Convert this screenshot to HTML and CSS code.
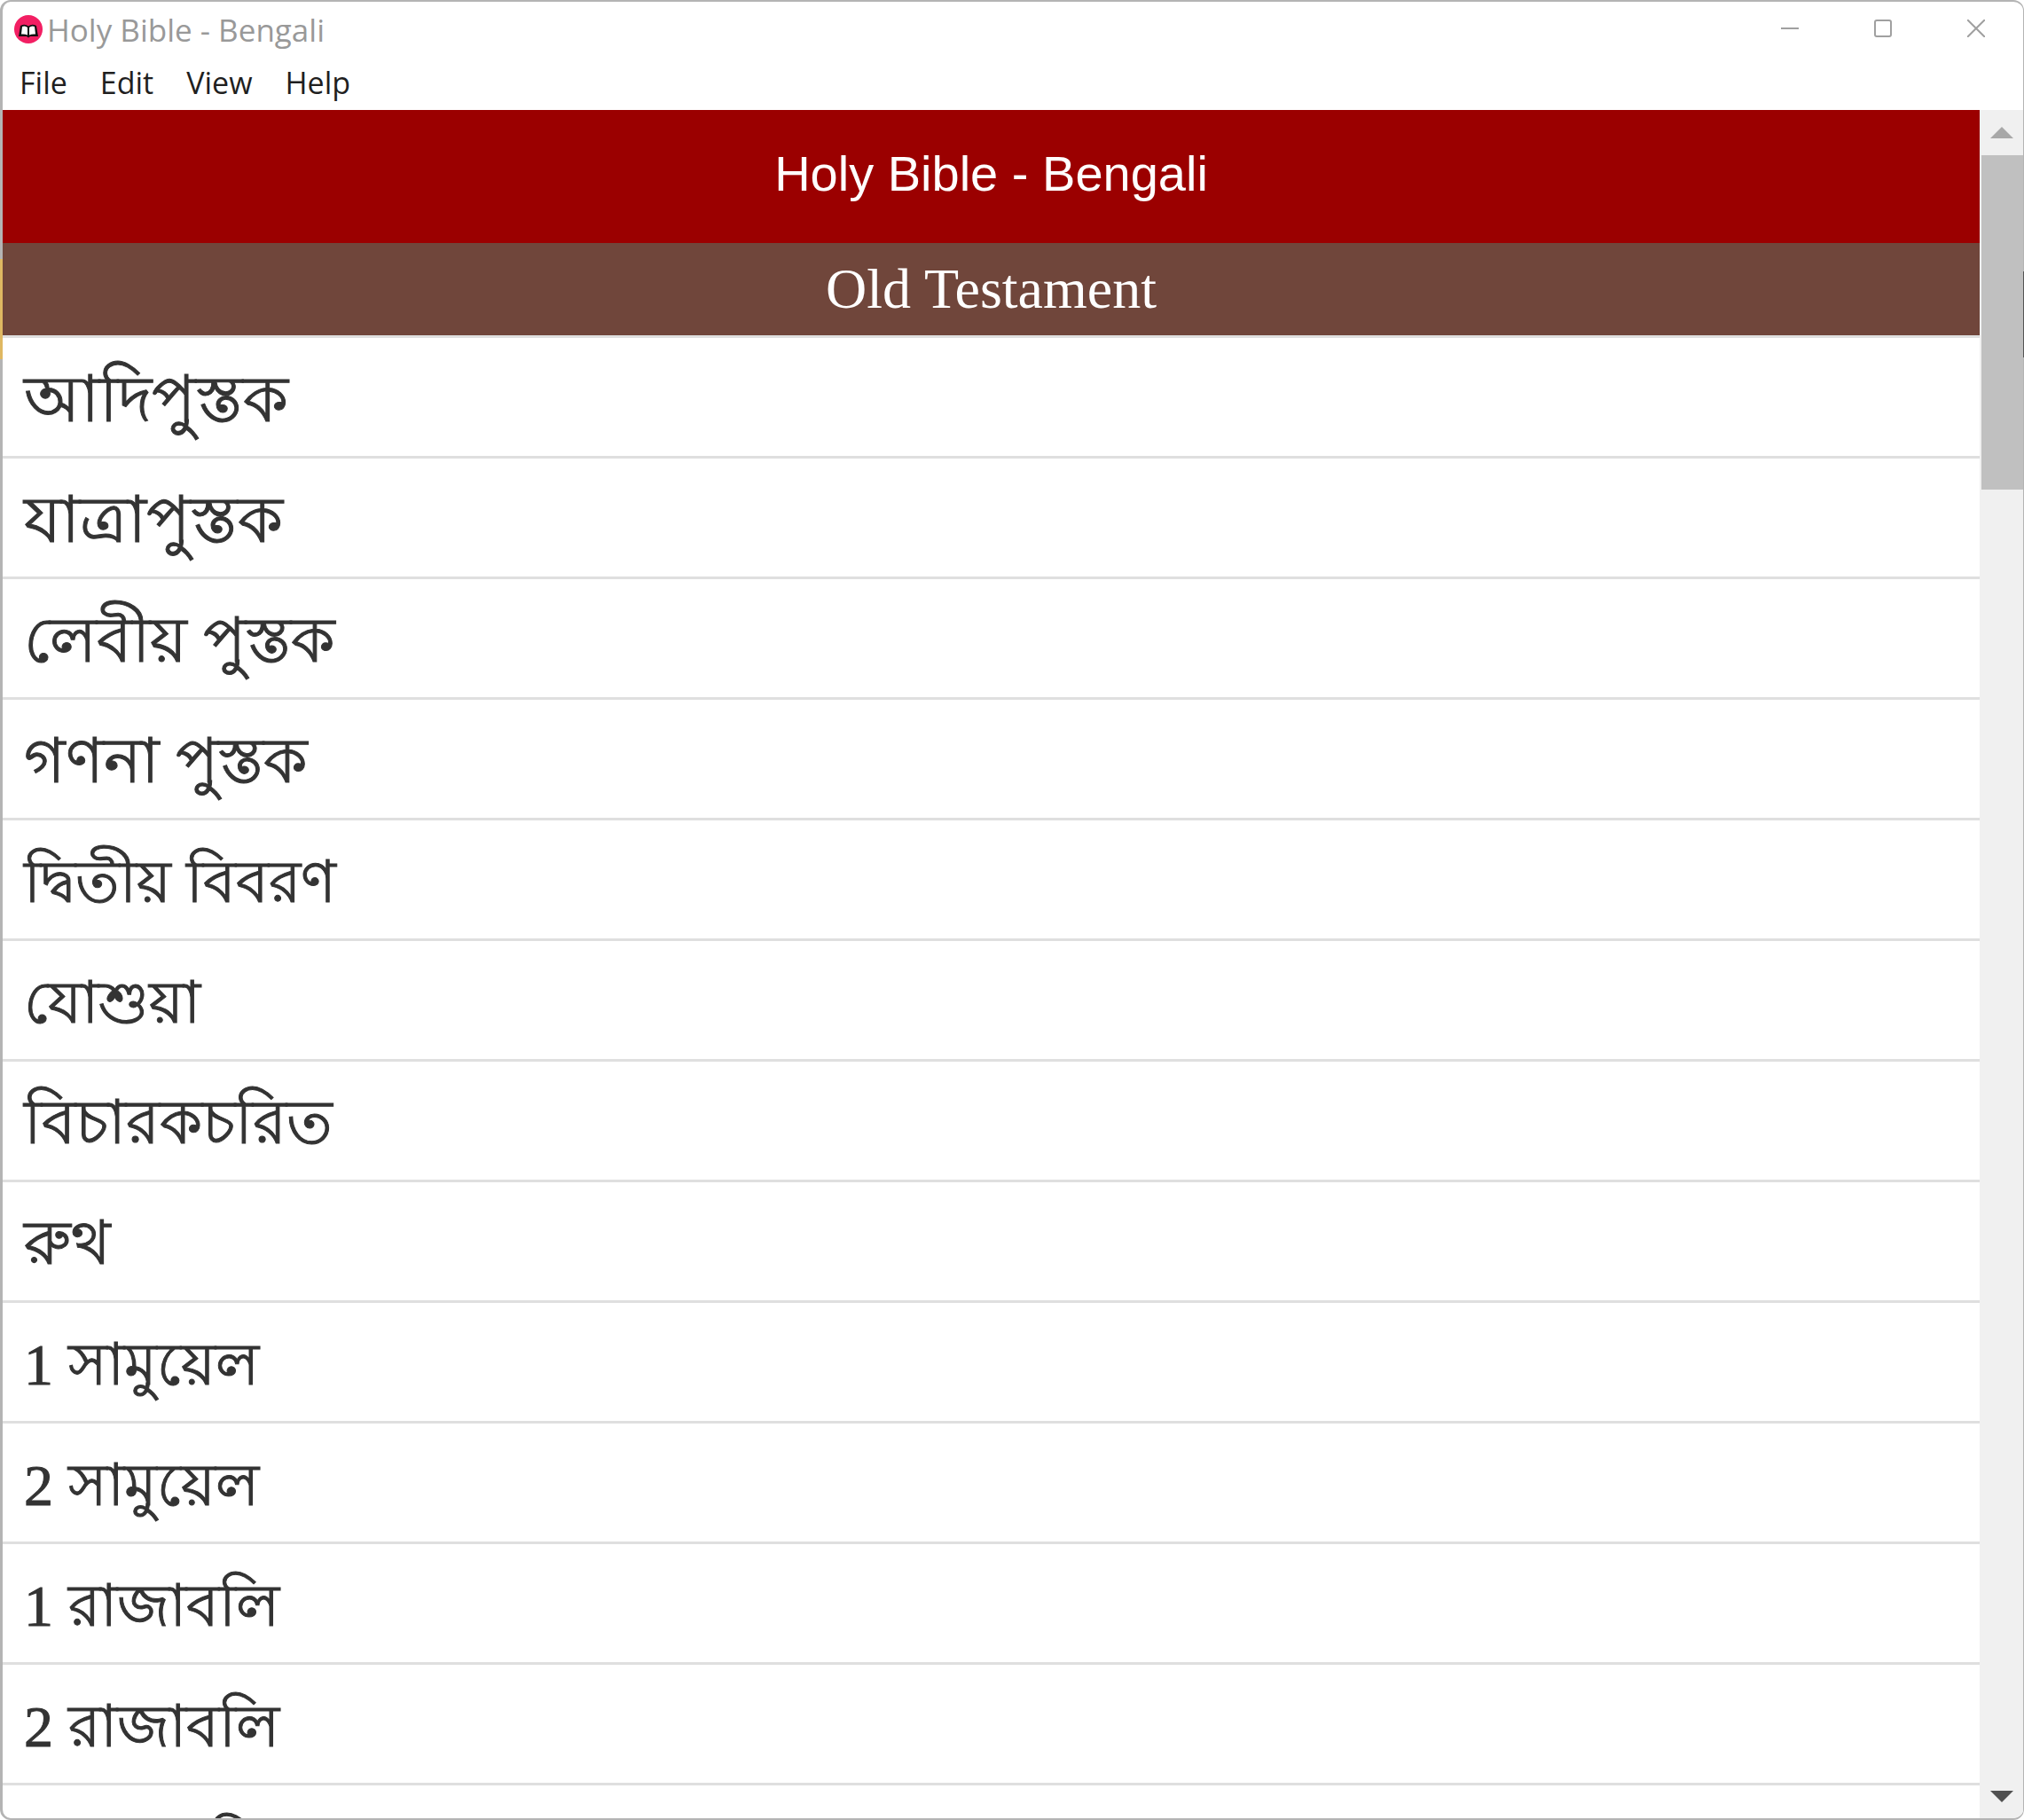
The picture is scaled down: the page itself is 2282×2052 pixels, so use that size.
FILE: index.html
```html
<!DOCTYPE html>
<html lang="bn">
<head>
<meta charset="utf-8">
<title>Holy Bible - Bengali</title>
<link rel="stylesheet" href="styles.css">
</head>
<body>
<div class="window">
  <div class="titlebar">
    <svg class="app-icon" viewBox="0 0 32 32" aria-hidden="true">
      <circle cx="16" cy="16" r="16" fill="#f21f63"/>
      <path d="M5 24 L7 12 Q12 9.5 16 12.5 Q20 9.5 25 12 L27 24 L18 24 L16 25.5 L14 24 Z" fill="#111"/>
      <path d="M8 21.5 L9 13 Q12.5 11.5 15 14 L15 22.5 Q12 21 8 21.5 Z M24 21.5 L23 13 Q19.5 11.5 17 14 L17 22.5 Q20 21 24 21.5 Z" fill="#fff"/>
    </svg>
    <span class="app-title">Holy Bible - Bengali</span>
    <div class="controls">
      <svg class="ctl" viewBox="0 0 20 20" aria-hidden="true"><path d="M0 10 H20" /></svg>
      <svg class="ctl" viewBox="0 0 20 20" aria-hidden="true"><rect x="1" y="1" width="18" height="18" rx="2"/></svg>
      <svg class="ctl" viewBox="0 0 20 20" aria-hidden="true"><path d="M0 0 L20 20 M20 0 L0 20"/></svg>
    </div>
  </div>
  <nav class="menubar">
    <span class="menu-item">File</span>
    <span class="menu-item">Edit</span>
    <span class="menu-item">View</span>
    <span class="menu-item">Help</span>
  </nav>
  <div class="body">
    <main class="content">
      <header class="app-header">Holy Bible - Bengali</header>
      <h2 class="section">Old Testament</h2>
      <ul class="books">
        <li class="book xl">আদিপুস্তক</li>
        <li class="book xl">যাত্রাপুস্তক</li>
        <li class="book lg">লেবীয় পুস্তক</li>
        <li class="book lg">গণনা পুস্তক</li>
        <li class="book">দ্বিতীয় বিবরণ</li>
        <li class="book">যোশুয়া</li>
        <li class="book md">বিচারকচরিত</li>
        <li class="book md">রুথ</li>
        <li class="book">1 সামুয়েল</li>
        <li class="book">2 সামুয়েল</li>
        <li class="book">1 রাজাবলি</li>
        <li class="book">2 রাজাবলি</li>
        <li class="book">1 বংশাবলি</li>
      </ul>
    </main>
    <div class="scrollbar">
      <div class="arrow-box"><span class="arrow-up"></span></div>
      <div class="thumb"></div>
      <div class="track"></div>
      <div class="arrow-box bottom"><span class="arrow-down"></span></div>
    </div>
  </div>
</div>
<div class="peek peek-yellow"></div>
<div class="peek peek-dark"></div>
</body>
</html>
```
FILE: styles.css
```css
* { box-sizing: border-box; }
html, body { margin: 0; height: 100%; background: #fff; overflow: hidden; }
.window {
  width: 2282px;
  height: 2052px;
  display: flex;
  flex-direction: column;
  background: #fff;
  border-style: solid;
  border-color: #b4b4b4;
  border-width: 2px 1px 2px 3px;
  border-radius: 12px;
  overflow: hidden;
}
.titlebar {
  height: 63px;
  flex: none;
  display: flex;
  align-items: center;
  padding-left: 13px;
}
.app-icon { width: 32px; height: 32px; flex: none; margin-top: -2px; }
.app-title {
  margin-left: 5px;
  font: 35px/1 "Open Sans", sans-serif;
  color: #999;
}
.controls {
  margin-left: auto;
  display: flex;
  gap: 85px;
  padding-right: 43px;
  margin-top: -3px;
}
.ctl { width: 20px; height: 20px; fill: none; stroke: #a0a0a0; stroke-width: 2; }
.menubar {
  height: 59px;
  flex: none;
  display: flex;
  gap: 37px;
  padding: 0 0 3px 19px;
  align-items: center;
  font: 34px/1 "Open Sans", sans-serif;
  color: #1f1f1f;
}
.body { flex: 1; min-height: 0; display: flex; }
.content { flex: 1; min-width: 0; overflow: hidden; }
.app-header {
  height: 150px;
  padding-bottom: 6px;
  display: flex;
  align-items: center;
  justify-content: center;
  background: #9b0000;
  color: #fff;
  font: 56px/1 "Liberation Sans", sans-serif;
}
.section {
  margin: 0;
  height: 104px;
  display: flex;
  align-items: center;
  justify-content: center;
  background: #70463b;
  color: #fff;
  font: 400 64px/1 "Liberation Serif", serif;
}
.books {
  list-style: none;
  margin: 0;
  padding: 0;
  border-top: 3px solid #dfdfdf;
}
.book {
  height: 136px;
  display: flex;
  align-items: center;
  padding: 6px 0 0 24px;
  border-bottom: 3px solid #dfdfdf;
  font: 66px/1 "Liberation Serif", "Noto Sans", serif;
  color: #333;
  -webkit-text-stroke: 1px #333;
}
.book.md { font-size: 69px; }
.book.lg { font-size: 71px; }
.book.xl { font-size: 73px; }
.scrollbar {
  width: 49px;
  flex: none;
  display: flex;
  flex-direction: column;
  background: #f0f0f0;
}
.arrow-box { height: 51px; flex: none; display: flex; align-items: center; justify-content: center; }
.arrow-box.bottom { margin-top: auto; }
.arrow-up { border: 13px solid transparent; border-top: 0; border-bottom: 13px solid #a8a8a8; }
.arrow-down { border: 13px solid transparent; border-bottom: 0; border-top: 13px solid #505050; margin-top: 2px; }
.thumb { height: 377px; flex: none; background: #c0c0c0; margin-left: 2px; }
.track { flex: 1; }
.peek { position: absolute; }
.peek-yellow { left: 0; top: 292px; width: 3px; height: 113px; background: #dfb862; }
.peek-dark { left: 2281px; top: 306px; width: 1px; height: 97px; background: #555; }
```
